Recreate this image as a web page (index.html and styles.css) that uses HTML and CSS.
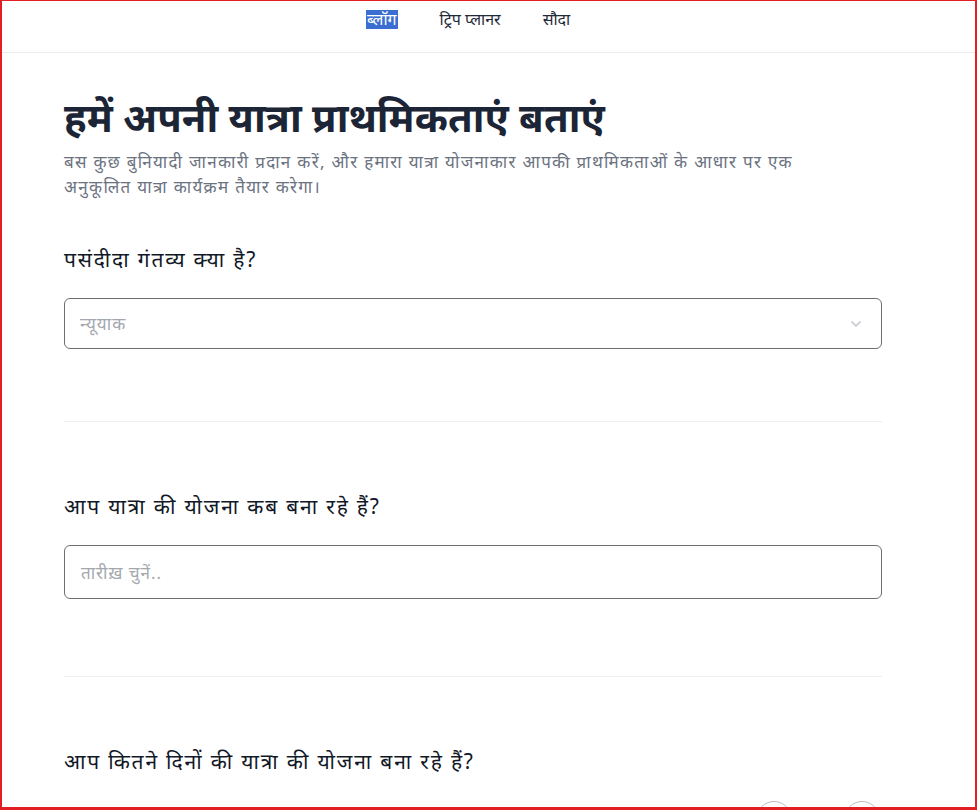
FILE: index.html
```html
<!DOCTYPE html>
<html lang="hi">
<head>
<meta charset="utf-8">
<title>यात्रा योजनाकार</title>
<link rel="stylesheet" href="styles.css">
</head>
<body>
<div class="frame">
  <nav class="nav">
    <a class="nav-link selected" href="#">ब्लॉग</a>
    <a class="nav-link" href="#">ट्रिप प्लानर</a>
    <a class="nav-link" href="#">सौदा</a>
  </nav>
  <main class="main">
    <h1 class="title">हमें अपनी यात्रा प्राथमिकताएं बताएं</h1>
    <p class="intro">बस कुछ बुनियादी जानकारी प्रदान करें, और हमारा यात्रा योजनाकार आपकी प्राथमिकताओं के आधार पर एक अनुकूलित यात्रा कार्यक्रम तैयार करेगा।</p>

    <section class="field first">
      <h2 class="label">पसंदीदा गंतव्य क्या है?</h2>
      <div class="select">
        <span class="placeholder">न्यूयाक</span>
        <svg class="chevron" width="14" height="14" viewBox="0 0 14 14"><path d="M3 5l4 4 4-4" fill="none" stroke="#c4c7cc" stroke-width="1.7" stroke-linecap="round" stroke-linejoin="round"/></svg>
      </div>
    </section>
    <hr class="divider">

    <section class="field">
      <h2 class="label">आप यात्रा की योजना कब बना रहे हैं?</h2>
      <div class="input">
        <span class="placeholder">तारीख़ चुनें..</span>
      </div>
    </section>
    <hr class="divider second">

    <section class="field">
      <h2 class="label">आप कितने दिनों की यात्रा की योजना बना रहे हैं?</h2>
      <div class="counter">
        <span class="circle"></span>
        <span class="circle"></span>
      </div>
    </section>
  </main>
</div>
</body>
</html>
```
FILE: styles.css
```css
html, body {
  margin: 0;
  padding: 0;
  background: #fff;
}
body {
  font-family: "Noto Sans", "Open Sans", sans-serif;
  color: #1f2937;
}
.frame {
  box-sizing: border-box;
  width: 977px;
  height: 810px;
  overflow: hidden;
  border: 2px solid #e31e24;
  border-top-width: 1px;
  border-bottom-width: 3px;
}
.nav {
  display: flex;
  gap: 42px;
  padding-left: 364px;
  height: 52px;
  align-items: flex-start;
  padding-top: 9px;
  box-sizing: border-box;
  border-bottom: 1px solid #ececec;
}
.nav-link {
  font-size: 16px;
  color: #1f2937;
  text-decoration: none;
  line-height: 19px;
  font-weight: 400;
}
.nav-link.selected {
  background: #3a6fd1;
  color: #fff;
  padding: 0 1px;
}
.main {
  width: 818px;
  padding-left: 62px;
}
.title {
  margin: 36px 0 0;
  font-size: 40px;
  line-height: 56px;
  font-weight: 700;
  color: #1c2536;
}
.intro {
  margin: 4px 0 0;
  max-width: 770px;
  font-size: 17px;
  line-height: 25px;
  color: #6b7280;
  letter-spacing: 1.3px;
}
.field {
  padding-top: 70px;
}
.field.first {
  padding-top: 46px;
}
.label {
  margin: 0;
  font-size: 21px;
  line-height: 28px;
  font-weight: 400;
  color: #111827;
  letter-spacing: 1.8px;
}
.select, .input {
  box-sizing: border-box;
  margin-top: 25px;
  border: 1px solid #6b6e73;
  border-radius: 6px;
  display: flex;
  align-items: center;
  padding: 0 18px 0 15px;
}
.select {
  height: 51px;
  justify-content: space-between;
}
.input {
  height: 54px;
  padding-left: 16px;
}
.placeholder {
  font-size: 17px;
  color: #a3a7ae;
  letter-spacing: 1px;
}
.divider {
  margin: 72px 0 0;
  border: 0;
  border-top: 1px solid #efefef;
}
.divider.second {
  margin-top: 77px;
}
.counter {
  display: flex;
  justify-content: flex-end;
  gap: 52px;
  margin-top: 26px;
  padding-right: 2px;
}
.circle {
  width: 34px;
  height: 34px;
  border-radius: 50%;
  border: 1px solid #b8bcc2;
}
```
